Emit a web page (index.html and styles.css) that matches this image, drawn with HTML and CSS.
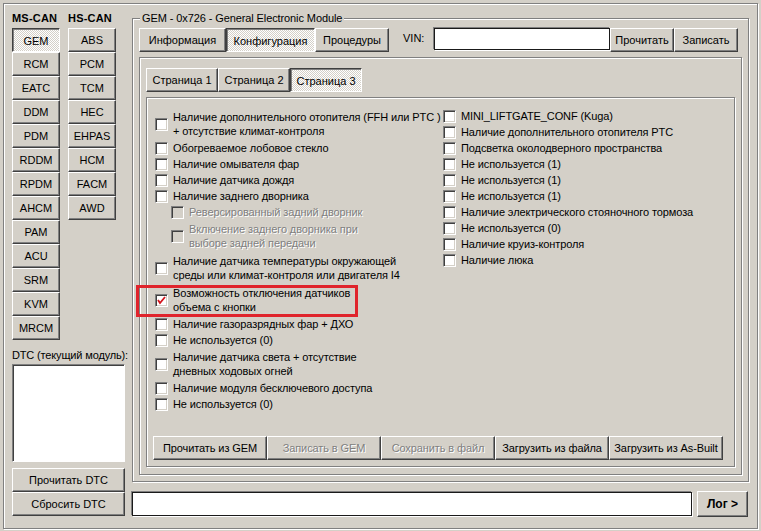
FILE: index.html
```html
<!DOCTYPE html>
<html lang="ru">
<head>
    <meta charset="UTF-8">
    <title>GEM - Конфигурация</title>
    <link rel="stylesheet" href="styles.css">
</head>
<body>
    <div class="window">
        <div class="side">
            <div class="bus-cols">
                <div class="bus">
                    <div class="bus-title">MS-CAN</div>
                    <button class="btn mod pressed">GEM</button>
                    <button class="btn mod">RCM</button>
                    <button class="btn mod">EATC</button>
                    <button class="btn mod">DDM</button>
                    <button class="btn mod">PDM</button>
                    <button class="btn mod">RDDM</button>
                    <button class="btn mod">RPDM</button>
                    <button class="btn mod">AHCM</button>
                    <button class="btn mod">PAM</button>
                    <button class="btn mod">ACU</button>
                    <button class="btn mod">SRM</button>
                    <button class="btn mod">KVM</button>
                    <button class="btn mod">MRCM</button>
                </div>
                <div class="bus">
                    <div class="bus-title">HS-CAN</div>
                    <button class="btn mod">ABS</button>
                    <button class="btn mod">PCM</button>
                    <button class="btn mod">TCM</button>
                    <button class="btn mod">HEC</button>
                    <button class="btn mod">EHPAS</button>
                    <button class="btn mod">HCM</button>
                    <button class="btn mod">FACM</button>
                    <button class="btn mod">AWD</button>
                </div>
            </div>
            <div class="dtc-label">DTC (текущий модуль):</div>
            <div class="listbox"></div>
            <button class="btn wide first">Прочитать DTC</button>
            <button class="btn wide">Сбросить DTC</button>
        </div>

        <div class="main">
            <div class="group">
                <span class="group-title">GEM - 0x726 - General Electronic Module</span>
                <div class="tabbar">
                    <button class="btn tab" style="width: 87px">Информация</button>
                    <button class="btn tab pressed" style="width: 89px">Конфигурация</button>
                    <button class="btn tab" style="width: 74px">Процедуры</button>
                    <span class="vin-label">VIN:</span>
                    <div class="edit vin"></div>
                    <button class="btn tab" style="width: 64px">Прочитать</button>
                    <button class="btn tab" style="width: 64px">Записать</button>
                </div>
                <div class="page">
                    <div class="subtabs">
                        <button class="btn tab" style="width: 72px">Страница 1</button>
                        <button class="btn tab" style="width: 72px">Страница 2</button>
                        <button class="btn tab pressed" style="width: 72px">Страница 3</button>
                    </div>
                    <div class="subpage">
                        <div class="opts">
                            <div class="col left">
                                <div class="opt two"><span class="cb"></span><span>Наличие дополнительного отопителя (FFH или PTC )<br>+ отсутствие климат-контроля</span></div>
                                <div class="opt"><span class="cb"></span><span>Обогреваемое лобовое стекло</span></div>
                                <div class="opt"><span class="cb"></span><span>Наличие омывателя фар</span></div>
                                <div class="opt"><span class="cb"></span><span>Наличие датчика дождя</span></div>
                                <div class="opt"><span class="cb"></span><span>Наличие заднего дворника</span></div>
                                <div class="opt sub off"><span class="cb"></span><span>Реверсированный задний дворник</span></div>
                                <div class="opt two sub off"><span class="cb"></span><span>Включение заднего дворника при<br>выборе задней передачи</span></div>
                                <div class="opt two"><span class="cb"></span><span>Наличие датчика температуры окружающей<br>среды или климат-контроля или двигателя I4</span></div>
                                <div class="opt two marked">
                                    <span class="cb">
                                        <svg width="11" height="11" viewBox="0 0 11 11"><polyline points="2,5 4,8 9,2" fill="none" stroke="#d4141c" stroke-width="1.8"/></svg>
                                    </span>
                                    <span>Возможность отключения датчиков<br>объема с кнопки</span>
                                    <span class="mark"></span>
                                </div>
                                <div class="opt"><span class="cb"></span><span>Наличие газоразрядных фар + ДХО</span></div>
                                <div class="opt"><span class="cb"></span><span>Не используется (0)</span></div>
                                <div class="opt two"><span class="cb"></span><span>Наличие датчика света + отсутствие<br>дневных ходовых огней</span></div>
                                <div class="opt"><span class="cb"></span><span>Наличие модуля бесключевого доступа</span></div>
                                <div class="opt"><span class="cb"></span><span>Не используется (0)</span></div>
                            </div>
                            <div class="col right">
                                <div class="opt"><span class="cb"></span><span>MINI_LIFTGATE_CONF (Kuga)</span></div>
                                <div class="opt"><span class="cb"></span><span>Наличие дополнительного отопителя PTC</span></div>
                                <div class="opt"><span class="cb"></span><span>Подсветка околодверного пространства</span></div>
                                <div class="opt"><span class="cb"></span><span>Не используется (1)</span></div>
                                <div class="opt"><span class="cb"></span><span>Не используется (1)</span></div>
                                <div class="opt"><span class="cb"></span><span>Не используется (1)</span></div>
                                <div class="opt"><span class="cb"></span><span>Наличие электрического стояночного тормоза</span></div>
                                <div class="opt"><span class="cb"></span><span>Не используется (0)</span></div>
                                <div class="opt"><span class="cb"></span><span>Наличие круиз-контроля</span></div>
                                <div class="opt"><span class="cb"></span><span>Наличие люка</span></div>
                            </div>
                        </div>
                        <div class="actions">
                            <button class="btn act">Прочитать из GEM</button>
                            <button class="btn act off">Записать в GEM</button>
                            <button class="btn act off">Сохранить в файл</button>
                            <button class="btn act">Загрузить из файла</button>
                            <button class="btn act">Загрузить из As-Built</button>
                        </div>
                    </div>
                </div>
            </div>
            <div class="logrow">
                <div class="edit log"></div>
                <button class="btn log-btn">Лог &gt;</button>
            </div>
        </div>
    </div>
</body>
</html>
```

FILE: styles.css
```css
* {
    margin: 0;
    padding: 0;
    box-sizing: border-box;
}

body {
    background: #d4d0c8;
    font-family: 'Liberation Sans', Arial, sans-serif;
    font-size: 11px;
    color: #000;
    width: 761px;
    height: 531px;
    overflow: hidden;
}

.window {
    margin: 3px;
    width: 755px;
    height: 526px;
    border: 1px solid #808080;
    box-shadow: inset 1px 1px #fff, 1px 1px #fff;
    display: flex;
    padding: 0 8px;
}

/* classic 3d button */
.btn {
    display: block;
    font-family: inherit;
    font-size: 11px;
    color: #000;
    background: #d4d0c8;
    border: 1px solid;
    border-color: #fff #404040 #404040 #fff;
    box-shadow: inset -1px -1px #808080;
    height: 24px;
    line-height: 20px;
    text-align: center;
    white-space: nowrap;
    padding: 0;
}

.btn.pressed {
    border-color: #404040 #fff #fff #404040;
    box-shadow: inset 1px 1px #808080;
    background-color: #d4d0c8;
    background-image: conic-gradient(#fff 25%, #d4d0c8 0 50%, #fff 0 75%, #d4d0c8 0);
    background-size: 2px 2px;
    padding-top: 2px;
}

.btn.off {
    color: #808080;
    text-shadow: 1px 1px #fff;
}

/* left column */
.side {
    width: 113px;
    padding-top: 8px;
    flex-shrink: 0;
}

.bus-cols {
    display: flex;
    gap: 8px;
}

.bus {
    width: 48px;
}

.bus-title {
    height: 16px;
    line-height: 12px;
    font-weight: bold;
    letter-spacing: 0.2px;
}

.mod {
    width: 48px;
}

.dtc-label {
    margin-top: 8px;
    height: 14px;
    line-height: 14px;
    margin-bottom: 2px;
    white-space: nowrap;
    letter-spacing: -0.15px;
}

.listbox {
    width: 113px;
    height: 98px;
    background: #fff;
    border: 1px solid;
    border-color: #808080 #fff #fff #808080;
    box-shadow: inset 1px 1px #404040;
}

.wide {
    width: 113px;
}

.wide.first {
    margin-top: 6px;
}

/* main column */
.main {
    flex: 1;
    margin-left: 7px;
    display: flex;
    flex-direction: column;
}

.group {
    position: relative;
    margin-top: 14px;
    height: 464px;
    border: 1px solid #808080;
    box-shadow: inset 1px 1px #fff, 1px 1px #fff;
    padding: 9px 6px 6px 6px;
    display: flex;
    flex-direction: column;
}

.group-title {
    position: absolute;
    top: -7px;
    left: 7px;
    padding: 0 2px;
    line-height: 13px;
    background: #d4d0c8;
    white-space: nowrap;
    letter-spacing: -0.1px;
}

.tabbar {
    display: flex;
    align-items: flex-start;
    height: 24px;
    flex-shrink: 0;
}

.tab {
    flex-shrink: 0;
}

.vin-label {
    margin-left: 14px;
    width: 31px;
    line-height: 20px;
}

.edit {
    background: #fff;
    border: 1px solid #1a1a1a;
    box-shadow: 1px 1px #fff, -1px -1px #808080;
}

.vin {
    width: 176px;
    height: 22px;
}

.page {
    margin-top: 5px;
    flex: 1;
    border: 1px solid #808080;
    box-shadow: inset 1px 1px #fff, 1px 1px #fff;
    padding: 10px 6px 7px 6px;
    display: flex;
    flex-direction: column;
}

.subtabs {
    display: flex;
    height: 24px;
    flex-shrink: 0;
}

.subpage {
    margin-top: 5px;
    flex: 1;
    border: 1px solid #808080;
    box-shadow: inset 1px 1px #fff, 1px 1px #fff;
    padding: 10px 7px 6px 8px;
    display: flex;
    flex-direction: column;
}

.opts {
    display: flex;
}

.col.left {
    width: 288px;
}

.opt {
    position: relative;
    display: flex;
    align-items: center;
    height: 16px;
    line-height: 14px;
    white-space: nowrap;
    letter-spacing: -0.1px;
}

.opt.two {
    height: 32px;
}

.opt.sub {
    padding-left: 16px;
}

.opt.off {
    color: #808080;
    text-shadow: 1px 1px #fff;
}

.cb {
    flex-shrink: 0;
    width: 13px;
    height: 13px;
    margin-right: 5px;
    background: #fff;
    border: 1px solid;
    border-color: #808080 #fff #fff #808080;
    box-shadow: inset 1px 1px #404040, inset -1px -1px #d4d0c8;
    display: flex;
    align-items: center;
    justify-content: center;
}

.opt.off .cb {
    background: #d4d0c8;
}

.cb svg {
    display: block;
}

.mark {
    position: absolute;
    left: -19px;
    top: 1px;
    width: 222px;
    height: 32px;
    border: 3px solid #e0242c;
}

.actions {
    margin-top: auto;
    margin-left: -2px;
    display: flex;
}

.act {
    width: 114px;
    letter-spacing: -0.1px;
}

/* bottom log line */
.logrow {
    margin-top: 9px;
    display: flex;
    align-items: center;
    gap: 5px;
}

.log {
    width: 560px;
    height: 24px;
}

.log-btn {
    width: 51px;
    height: 26px;
    line-height: 22px;
    font-weight: bold;
    font-size: 12px;
}
```
